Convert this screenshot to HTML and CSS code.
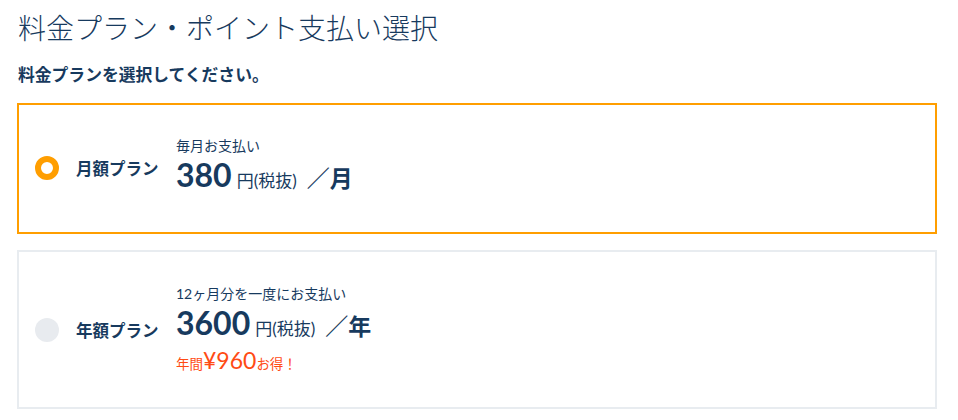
FILE: index.html
```html
<!DOCTYPE html>
<html lang="ja">
<head>
    <meta charset="UTF-8">
    <meta name="viewport" content="width=device-width, initial-scale=1.0">
    <title>料金プラン・ポイント支払い選択</title>
    <link rel="stylesheet" href="styles.css">
</head>
<body>
    <h1 class="page-title">料金プラン・ポイント支払い選択</h1>
    <p class="lead">料金プランを選択してください。</p>

    <div class="plans">
        <label class="plan selected">
            <span class="radio"></span>
            <span class="plan-name">月額プラン</span>
            <span class="plan-body">
                <span class="plan-note">毎月お支払い</span>
                <span class="price">
                    <span class="amount">380</span>
                    <span class="unit">円(税抜)</span>
                    <span class="per">／月</span>
                </span>
            </span>
        </label>

        <label class="plan">
            <span class="radio"></span>
            <span class="plan-name">年額プラン</span>
            <span class="plan-body">
                <span class="plan-note">12ヶ月分を一度にお支払い</span>
                <span class="price">
                    <span class="amount">3600</span>
                    <span class="unit">円(税抜)</span>
                    <span class="per">／年</span>
                </span>
                <span class="deal">年間<span class="deal-num">¥960</span>お得！</span>
            </span>
        </label>
    </div>
</body>
</html>
```

FILE: styles.css
```css
body {
    margin: 0;
    padding: 0 21px 0 17px;
    font-family: Lato, "Noto Sans CJK JP", sans-serif;
    color: #173a5e;
    background: #fff;
}

.page-title {
    margin: 10px 0 0 1px;
    font-size: 28px;
    font-weight: 300;
    line-height: 36px;
}

.lead {
    margin: 18px 0 0 1px;
    font-size: 16.8px;
    font-weight: bold;
    line-height: 22px;
}

.plans {
    display: flex;
    flex-direction: column;
    gap: 16px;
    margin-top: 17px;
}

.plan {
    display: flex;
    align-items: center;
    border: 2px solid #e8ecf0;
    padding: 32px 15px 31px;
    cursor: pointer;
}

.plan.selected {
    border-color: #ff9e00;
    padding: 31px 15px 32px;
}

.radio {
    width: 24px;
    height: 24px;
    border-radius: 50%;
    background: #e8ebef;
    box-sizing: border-box;
    flex-shrink: 0;
    margin-left: 1px;
}

.selected .radio {
    background: #fff;
    border: 6px solid #ff9e00;
}

.plan-name {
    margin-left: 17px;
    width: 100px;
    font-size: 16.5px;
    font-weight: bold;
}

.plan-body {
    display: flex;
    flex-direction: column;
}

.plan-note {
    font-size: 14px;
    line-height: 20px;
}

.price {
    display: flex;
    align-items: baseline;
    line-height: 38px;
}

.amount {
    font-size: 32px;
    font-weight: bold;
}

.unit {
    margin-left: 5px;
    font-size: 17px;
}

.per {
    margin-left: 10px;
    font-size: 23px;
    font-weight: bold;
}

.deal {
    color: #ff4b14;
    font-size: 13.5px;
    line-height: 24px;
}

.deal-num {
    font-size: 23px;
}
```
